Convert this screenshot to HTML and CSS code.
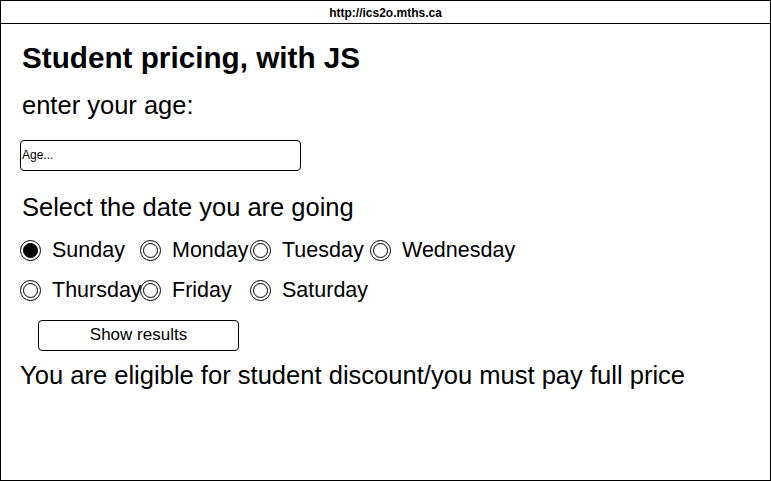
FILE: index.html
```html
<!DOCTYPE html>
<html>
<head>
<meta charset="utf-8">
<title>Student pricing</title>
<link rel="stylesheet" href="styles.css">
</head>
<body>
<div class="frame">
  <div class="urlbar">http://ics2o.mths.ca</div>
  <div class="content">
    <h1 class="title">Student pricing, with JS</h1>
    <p class="label">enter your age:</p>
    <input class="age" type="text" placeholder="Age...">
    <p class="label label-date">Select the date you are going</p>
    <div class="days">
      <label class="day"><input class="radio" type="radio" name="day" checked><span>Sunday</span></label>
      <label class="day"><input class="radio" type="radio" name="day"><span>Monday</span></label>
      <label class="day"><input class="radio" type="radio" name="day"><span>Tuesday</span></label>
      <label class="day"><input class="radio" type="radio" name="day"><span>Wednesday</span></label>
      <label class="day"><input class="radio" type="radio" name="day"><span>Thursday</span></label>
      <label class="day"><input class="radio" type="radio" name="day"><span>Friday</span></label>
      <label class="day"><input class="radio" type="radio" name="day"><span>Saturday</span></label>
    </div>
    <button class="show" type="button">Show results</button>
    <p class="result">You are eligible for student discount/you must pay full price</p>
  </div>
</div>
</body>
</html>
```

FILE: styles.css
```css
* { box-sizing: border-box; }
html, body { margin: 0; padding: 0; background: #fff; }
body { font-family: "Liberation Sans", Arial, sans-serif; color: #000; }

.frame {
  width: 771px;
  height: 481px;
  border: 1px solid #000;
  display: flex;
  flex-direction: column;
}

.urlbar {
  height: 23px;
  border-bottom: 1px solid #000;
  font-size: 12px;
  font-weight: bold;
  display: flex;
  align-items: center;
  justify-content: center;
  padding-top: 1px;
}

.content {
  padding-left: 19px;
  display: flex;
  flex-direction: column;
  align-items: flex-start;
}

.title {
  margin: 19px 0 0 2px;
  font-size: 29.7px;
  line-height: 29.5px;
  font-weight: bold;
}

.label {
  margin: 20px 0 0 2px;
  font-size: 25.5px;
  line-height: 25.4px;
}

.age {
  margin-top: 22px;
  width: 281px;
  height: 31px;
  border: 1px solid #000;
  border-radius: 4px;
  padding: 0 0 0 1px;
  font-family: "Liberation Sans", Arial, sans-serif;
  font-size: 12px;
  color: #000;
  background: #fff;
  outline: none;
}
.age::placeholder { color: #000; opacity: 1; }

.label-date { margin-top: 24px; }

.days {
  margin-top: 10px;
  display: grid;
  grid-template-columns: 120px 110px 120px 200px;
  grid-auto-rows: 40px;
}

.day {
  display: flex;
  align-items: center;
  gap: 10px;
  font-size: 21.5px;
  white-space: nowrap;
}

.radio {
  appearance: none;
  -webkit-appearance: none;
  margin: 0;
  width: 21px;
  height: 21px;
  border: 1.3px solid #000;
  border-radius: 50%;
  display: flex;
  align-items: center;
  justify-content: center;
  background: #fff;
  flex: none;
}
.radio::after {
  content: "";
  width: 15px;
  height: 15px;
  border: 1.2px solid #000;
  border-radius: 50%;
  box-sizing: border-box;
}
.radio:checked::after { background: #000; }
.day span { margin-left: 1px; }

.show {
  margin: 10px 0 0 18px;
  width: 201px;
  height: 31px;
  border: 1px solid #000;
  border-radius: 4px;
  background: #fff;
  font-family: "Liberation Sans", Arial, sans-serif;
  font-size: 17px;
  color: #000;
  padding: 0 0 1px 0;
}

.result {
  margin: 12px 0 0 0;
  font-size: 25.55px;
  line-height: 25.4px;
}
```
